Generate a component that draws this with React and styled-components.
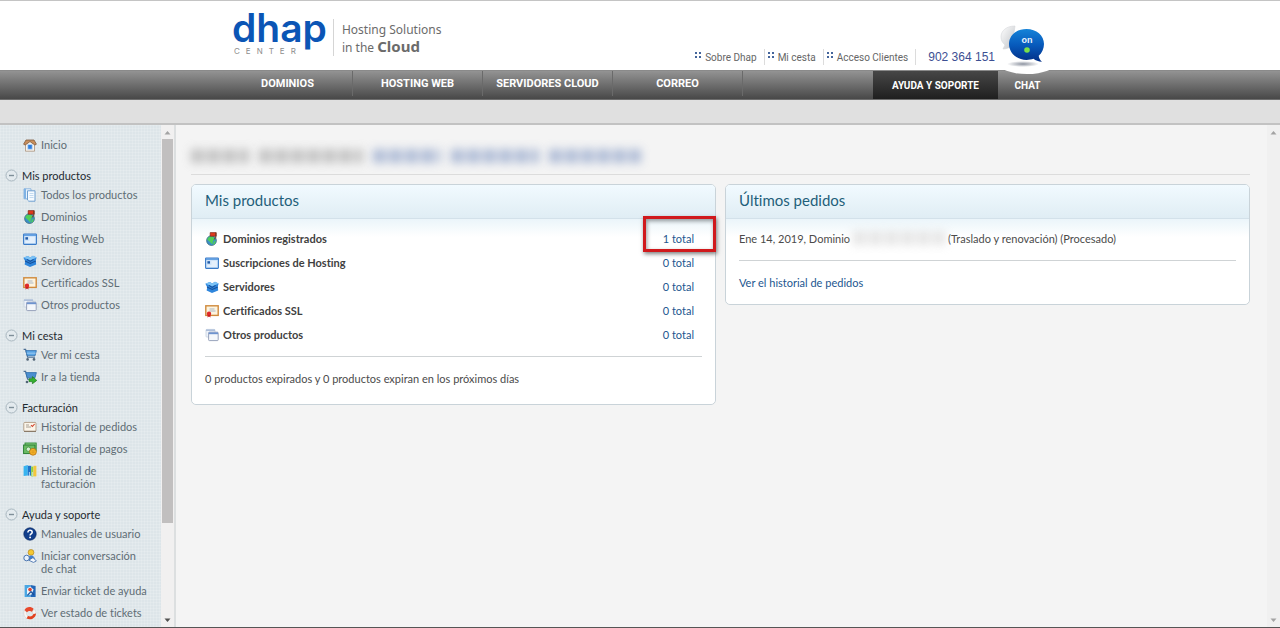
import React, { useState } from 'react';
import styled, { createGlobalStyle, css } from 'styled-components';

const sections = [
  {
    title: 'Mis productos',
    items: [
      { label: 'Todos los productos', icon: 'pages' },
      { label: 'Dominios', icon: 'domain' },
      { label: 'Hosting Web', icon: 'hosting' },
      { label: 'Servidores', icon: 'server' },
      { label: 'Certificados SSL', icon: 'ssl' },
      { label: 'Otros productos', icon: 'other' },
    ],
  },
  {
    title: 'Mi cesta',
    items: [
      { label: 'Ver mi cesta', icon: 'cart' },
      { label: 'Ir a la tienda', icon: 'store' },
    ],
  },
  {
    title: 'Facturación',
    items: [
      { label: 'Historial de pedidos', icon: 'orders' },
      { label: 'Historial de pagos', icon: 'payments' },
      { label: 'Historial de facturación', icon: 'billing' },
    ],
  },
  {
    title: 'Ayuda y soporte',
    items: [
      { label: 'Manuales de usuario', icon: 'help' },
      { label: 'Iniciar conversación de chat', icon: 'agent' },
      { label: 'Enviar ticket de ayuda', icon: 'ticket' },
      { label: 'Ver estado de tickets', icon: 'lifebuoy' },
    ],
  },
];

const products = [
  { label: 'Dominios registrados', icon: 'domain', total: 1 },
  { label: 'Suscripciones de Hosting', icon: 'hosting', total: 0 },
  { label: 'Servidores', icon: 'server', total: 0 },
  { label: 'Certificados SSL', icon: 'ssl', total: 0 },
  { label: 'Otros productos', icon: 'other', total: 0 },
];

const drawings = {
  home: (
    <>
      <path d="M2.5 6v7.2h9V6L7 2.5z" fill="#f7f3ee" stroke="#a9927c" strokeWidth=".8" />
      <path d="M.6 6.2L3 2h8l2.4 4.2-1.6.8L7 3.6 2.2 7z" fill="#c98f5c" stroke="#7d583c" strokeWidth=".8" />
      <rect x="4.8" y="6.6" width="4.4" height="4.6" fill="#2b7ee0" stroke="#bcd6f4" strokeWidth=".8" />
    </>
  ),
  pages: (
    <>
      <path d="M1 .8h7v10H1z" fill="#e8f3fd" stroke="#8fb7de" />
      <path d="M1 .8h2v10H1z" fill="#7fb2e4" />
      <path d="M4.5 2.8h7.5v10.4H5.8L4.5 12z" fill="#f6fbff" stroke="#6f9fcf" />
      <path d="M6.5 5.5h4M6.5 7.5h4M6.5 9.5h4" stroke="#b7d3ec" strokeWidth=".8" />
    </>
  ),
  domain: (
    <>
      <circle cx="6.5" cy="8.6" r="4.9" fill="#3c8fc7" stroke="#2c5f6f" strokeWidth=".7" />
      <path d="M2.2 7.4c1.6-3 3.6-3.4 5.4-2.9l2.4 2.2-2 2.4-.6 3.4-2.4-2.6z" fill="#4fd05a" />
      <path d="M9 9.4l1.8-1-.8 3.4-2 1z" fill="#4fd05a" />
      <path d="M5.2.6h6v3.6h-6z" fill="#e03a1e" stroke="#7d2415" strokeWidth=".7" />
      <path d="M10.8.8v5l-2 1.6" fill="none" stroke="#6a3b24" />
    </>
  ),
  hosting: (
    <>
      <rect x=".6" y="2" width="12.8" height="10.4" rx=".6" fill="#cfe4fa" stroke="#3a7bc8" strokeWidth="1.1" />
      <path d="M1 2.4h12v1.4H1z" fill="#4b91de" />
      <rect x="2.4" y="5.2" width="2.6" height="2.4" fill="#245da8" />
      <path d="M6.4 6h5.4M6.4 8h5.4M2.4 10h9.4" stroke="#fff" strokeWidth=".9" />
    </>
  ),
  server: (
    <>
      <path d="M.4 3.8L4.8 2l2.4 1.6L10 1.8l3.6 1.6-.8 3.2.4 3.8L7 13 1.6 10.6l.6-3.4z" fill="#2f86dc" />
      <path d="M.4 3.8L4.8 2l2.4 1.6L10 1.8l3.6 1.6L7.4 6.2z" fill="#7cc2f5" />
      <path d="M2 7l5.2 2.4L12.8 7M4 5.4l3.2 2 3.4-2" fill="none" stroke="#174f99" strokeWidth="1.1" />
    </>
  ),
  ssl: (
    <>
      <rect x=".8" y="1.8" width="12.4" height="9.6" fill="#fdf4df" stroke="#d08a3c" strokeWidth="1.4" />
      <path d="M4.5 5h5M4.5 7h6" stroke="#a9b7c6" />
      <circle cx="4" cy="9.8" r="2.2" fill="#e02a2a" />
      <path d="M2.8 11l-.4 2.6 1.6-1 1.6 1-.4-2.6z" fill="#c81f1f" />
    </>
  ),
  other: (
    <>
      <rect x="1" y="1.4" width="9" height="7.6" rx=".8" fill="#eef3fa" stroke="#c5d0e0" strokeWidth=".8" />
      <path d="M1 1.4h9v1.6H1z" fill="#aebfda" />
      <rect x="3.6" y="4.2" width="9.6" height="8.4" rx=".8" fill="#f4f7fb" stroke="#8d99b4" strokeWidth=".9" />
      <path d="M3.8 4.4h9.2v1.8H3.8z" fill="#6d93cf" />
    </>
  ),
  cart: (
    <>
      <path d="M.6 1.4h2l2 7.8h7.4" fill="none" stroke="#4d6f94" strokeWidth="1.1" />
      <path d="M2.8 2.6h10.6l-1.4 5.2H4.2z" fill="#5aa6e6" stroke="#2d6cab" strokeWidth=".8" />
      <path d="M3.6 5.2h9.2" stroke="#c5e1f8" strokeWidth=".6" />
      <circle cx="4.6" cy="11.4" r="1.3" fill="#526577" />
      <circle cx="11" cy="11.4" r="1.3" fill="#526577" />
    </>
  ),
  store: (
    <>
      <path d="M.6 1.4h2l2 7.8h7.4" fill="none" stroke="#4d6f94" strokeWidth="1.1" />
      <path d="M2.8 2.6h10.6l-1.4 5.2H4.2z" fill="#4a8fd0" stroke="#2d6cab" strokeWidth=".8" />
      <circle cx="4" cy="12" r="1.3" fill="#526577" />
      <path d="M6 8.8h3.4V6.6l4.4 3.8-4.4 3.4v-2.2H6z" fill="#35b22f" stroke="#1c7a1c" strokeWidth=".7" />
    </>
  ),
  orders: (
    <>
      <rect x=".8" y="2.4" width="12.2" height="9" rx="1" fill="#fbf5ea" stroke="#b3a08a" />
      <path d="M1 11.4h12" stroke="#8a7a68" strokeWidth="1.2" />
      <path d="M3 5h3M3 7h5" stroke="#a79e92" />
      <path d="M8 5.2l1.4 1.2 2.2-2.4" fill="none" stroke="#d2452e" strokeWidth="1.1" />
    </>
  ),
  payments: (
    <>
      <rect x="2" y="1" width="11.2" height="8" fill="#8fce84" stroke="#2c8a34" strokeWidth=".9" />
      <rect x=".6" y="3" width="11.4" height="8.6" fill="#6cbb63" stroke="#237a2c" strokeWidth=".9" />
      <circle cx="5.4" cy="7.2" r="2.2" fill="#d5efcf" stroke="#2c8a34" strokeWidth=".7" />
      <circle cx="10" cy="9.8" r="3.4" fill="#f6b62b" stroke="#b9700f" strokeWidth=".8" />
      <path d="M8.4 9h3.2M8.4 10.8h3.2" stroke="#d48c16" strokeWidth=".8" />
    </>
  ),
  billing: (
    <>
      <path d="M.6 2.2L4.8 1v10.4L.6 12z" fill="#38b4f0" />
      <path d="M4.8 1.8h3.4v9.8H4.8z" fill="#1f72c9" />
      <path d="M8.2 2.6h2.2v9.8H8.2z" fill="#8ed13c" />
      <path d="M10.4 1.8h3v10.6h-3z" fill="#f4c63d" />
      <path d="M6.4 8v4M9.3 8v4" stroke="#d7effc" strokeWidth=".8" />
    </>
  ),
  help: (
    <>
      <circle cx="7" cy="7" r="6.2" fill="#123f8c" stroke="#0b2a63" strokeWidth=".7" />
      <path d="M4.9 5.4c0-2.8 4.3-2.6 4.3-.2 0 1.6-2.1 1.6-2.1 3.2" fill="none" stroke="#fff" strokeWidth="1.5" />
      <circle cx="7.1" cy="10.4" r=".95" fill="#fff" />
    </>
  ),
  agent: (
    <>
      <circle cx="8" cy="3.4" r="2.9" fill="#f5c832" stroke="#a97a14" strokeWidth=".6" />
      <path d="M4.6 11c0-6 7.4-6 7.4 0z" fill="#3f7fd0" />
      <circle cx="3.6" cy="9" r="2.8" fill="#e8f1fb" stroke="#3a68a8" strokeWidth=".9" />
      <path d="M5.8 11.2l4.2-2.6 3.4 3.4-3 1.4z" fill="#f4f7fc" stroke="#3a68a8" strokeWidth=".8" />
    </>
  ),
  ticket: (
    <>
      <path d="M1.6 1h6v12h-6z" fill="#4aa6e2" />
      <path d="M7.6 1l5 1v11h-5z" fill="#2366b8" />
      <path d="M4 4.4l3.2-2 3.4 3.2-2.2 5.2H4z" fill="#e9f4fc" />
      <circle cx="7" cy="5.6" r="1.8" fill="#de4330" />
      <path d="M4.4 11.4L8 7.6l3 3.4" fill="none" stroke="#1d4f96" strokeWidth="1.2" />
    </>
  ),
  lifebuoy: (
    <>
      <path d="M1.4 4.2C3.4.6 7.6 0 10.8 3L9.2 6C7.2 4.4 5.4 4.6 3.8 6.4z" fill="#e8492c" />
      <path d="M9.2 6l1.6-3c1.6 1.2 2.2 2.6 2.2 4.4l-2.8.8zM1.4 4.2l2.4 2.2c-.6 1.6 0 2.8 1.2 3.6l-1.4 2.6C.8 10.4.2 7.2 1.4 4.2z" fill="#f8f5f3" stroke="#cfc8c4" strokeWidth=".5" />
      <path d="M13 7.4c-.2 4-4.4 7.4-9.4 5.2L5 10c2.4 1 4.4.2 5.2-1.8z" fill="#e2411f" />
    </>
  ),
};

const Icon = ({ name }) => (
  <IconSvg viewBox="0 0 14 14" aria-hidden="true">
    {drawings[name]}
  </IconSvg>
);

const Dots = () => (
  <DotsSvg viewBox="0 0 7 7" aria-hidden="true">
    <path d="M0 0h2v2H0zM4 0h2v2H4zM0 4h2v2H0zM4 4h2v2H4z" fill="#44659b" />
  </DotsSvg>
);

const ChatBubble = () => (
  <BubbleSvg viewBox="0 0 60 52" aria-hidden="true">
    <defs>
      <linearGradient id="bubbleBlue" x1="0" y1="0" x2="0" y2="1">
        <stop offset="0" stopColor="#1583d8" />
        <stop offset=".5" stopColor="#0759bb" />
        <stop offset="1" stopColor="#032f86" />
      </linearGradient>
      <radialGradient id="bubbleShade">
        <stop offset="0" stopColor="#8d93a0" />
        <stop offset="1" stopColor="#fff" />
      </radialGradient>
      <linearGradient id="bubbleGrey" x1="0" y1="0" x2="1" y2="1">
        <stop offset="0" stopColor="#fff" />
        <stop offset="1" stopColor="#bfc2c6" />
      </linearGradient>
    </defs>
    <ellipse cx="29" cy="40" rx="29" ry="11" fill="#fff" />
    <ellipse cx="25" cy="41" rx="16" ry="3" fill="url(#bubbleShade)" />
    <path d="M17 3C8 3 3 8 3 14c0 4 2 6 4 8l-2 4c4 0 7-2 9-3z" fill="url(#bubbleGrey)" stroke="#d5d7da" strokeWidth=".6" />
    <path d="M28.500 6C18 6 11 12.500 11 21s7.500 16 17.500 16c2.500 0 5-.5 7-1.200 2 1.600 5 3 8.500 3-2-1.500-3-3.800-3.300-6C44 30 46 25.500 46 21c0-8.500-7.500-15-17.500-15z" fill="url(#bubbleBlue)" />
    <circle cx="29" cy="27" r="2.800" fill="#7be04a" />
    <text x="29" y="20" textAnchor="middle" fontFamily="Liberation Sans, sans-serif" fontWeight="700" fontSize="9" fill="#e8f3ff">on</text>
  </BubbleSvg>
);

const ScrollBar = ({ thumb, faint }) => (
  <Track $faint={faint} aria-hidden="true">
    <ArrowSvg viewBox="0 0 13 14">
      <path d="M3.500 9.500L6.500 6l3 3.500z" fill="#a3a3a3" />
    </ArrowSvg>
    <Rail>{thumb && <Thumb />}</Rail>
    <ArrowSvg viewBox="0 0 13 14">
      <path d="M3.500 5.500h6L6.500 9z" fill={faint ? '#a3a3a3' : '#505050'} />
    </ArrowSvg>
  </Track>
);

const MenuSection = ({ title, items }) => {
  const [open, setOpen] = useState(true);

  return (
    <section>
      <SectionToggle type="button" aria-expanded={open} onClick={() => setOpen(!open)}>
        <ToggleSvg viewBox="0 0 13 13" aria-hidden="true">
          <circle cx="6.500" cy="6.500" r="5.500" fill="#e3eaee" stroke="#a9b7bf" />
          <path d={open ? 'M4 6.500h5' : 'M4 6.500h5M6.500 4v5'} stroke="#7f8f99" strokeWidth="1.400" />
        </ToggleSvg>
        {title}
      </SectionToggle>
      {open && (
        <MenuList>
          {items.map((item) => (
            <li key={item.label}>
              <MenuLink href="#">
                <Icon name={item.icon} />
                <span>{item.label}</span>
              </MenuLink>
            </li>
          ))}
        </MenuList>
      )}
    </section>
  );
};

const App = () => (
  <Page>
    <GlobalStyle />
    <Header>
      <Container>
        <Brand href="#">
          <BrandMark>
            <BrandName>dhap</BrandName>
            <BrandSub>CENTER</BrandSub>
          </BrandMark>
          <Slogan>
            Hosting Solutions
            <br />
            in the <strong>Cloud</strong>
          </Slogan>
        </Brand>
        <TopLinks>
          <TopLink href="#"><Dots />Sobre Dhap</TopLink>
          <TopLink href="#"><Dots />Mi cesta</TopLink>
          <TopLink href="#"><Dots />Acceso Clientes</TopLink>
          <Phone>902 364 151</Phone>
        </TopLinks>
      </Container>
    </Header>

    <NavBar>
      <Container>
        <NavLink href="#">DOMINIOS</NavLink>
        <NavLink href="#">HOSTING WEB</NavLink>
        <NavLink href="#">SERVIDORES CLOUD</NavLink>
        <NavLink href="#">CORREO</NavLink>
        <SupportLink href="#">AYUDA Y SOPORTE</SupportLink>
        <ChatLink href="#">
          <ChatBubble />
          CHAT
        </ChatLink>
      </Container>
    </NavBar>
    <SubBar />

    <Body>
      <Sidebar>
        <MenuLink href="#">
          <Icon name="home" />
          <span>Inicio</span>
        </MenuLink>
        {sections.map((section) => (
          <MenuSection key={section.title} {...section} />
        ))}
      </Sidebar>
      <ScrollBar thumb />

      <Main>
        <Customer>
          <Redacted $width={58} $color="#a0a0a0" />
          <Redacted $width={104} $color="#a0a0a0" />
          <Redacted $width={68} $color="#7f95c2" />
          <Redacted $width={88} $color="#7f95c2" />
          <Redacted $width={92} $color="#7f95c2" />
        </Customer>
        <Panels>
          <Panel>
            <PanelTitle>Mis productos</PanelTitle>
            <PanelBody>
              <ProductTable>
                <tbody>
                  {products.map((product) => (
                    <tr key={product.label}>
                      <ProductName scope="row">
                        <NameLine>
                          <Icon name={product.icon} />
                          {product.label}
                        </NameLine>
                      </ProductName>
                      <ProductTotal>
                        <TextLink href="#">{product.total} total</TextLink>
                        {product.total > 0 && <Highlight />}
                      </ProductTotal>
                    </tr>
                  ))}
                </tbody>
              </ProductTable>
              <Divider />
              <Text>0 productos expirados y 0 productos expiran en los próximos días</Text>
            </PanelBody>
          </Panel>

          <Panel>
            <PanelTitle>Últimos pedidos</PanelTitle>
            <PanelBody $compact>
              <OrderLine>
                Ene 14, 2019, Dominio
                <Redacted $width={92} $color="#d2d2d2" />
                (Traslado y renovación) (Procesado)
              </OrderLine>
              <Divider />
              <Text>
                <TextLink href="#">Ver el historial de pedidos</TextLink>
              </Text>
            </PanelBody>
          </Panel>
        </Panels>
      </Main>
      <ScrollBar faint />
    </Body>
  </Page>
);

export default App;

// Styled Components

const GlobalStyle = createGlobalStyle`
  * {
    box-sizing: border-box;
  }

  body {
    margin: 0;
    background: #f4f4f4;
    color: #4b4b4b;
    font-family: Lato, 'Open Sans', sans-serif;
    font-size: 11px;
    font-variant-ligatures: none;
    line-height: 13px;
  }

  a {
    text-decoration: none;
  }
`;

const Page = styled.div`
  display: flex;
  flex-direction: column;
  height: 100vh;
  border-bottom: 1px solid #555;
`;

const Container = styled.div`
  display: flex;
  width: 100%;
  max-width: 834px;
  height: 100%;
  margin: 0 auto;
`;

const Header = styled.header`
  height: 70px;
  background: #fff;
  border-top: 1px solid #c4c4c4;
`;

const Brand = styled.a`
  display: flex;
  align-items: flex-start;
  padding: 9px 0 0 9px;
`;

const BrandMark = styled.span`
  display: flex;
  flex-direction: column;
`;

const BrandName = styled.span`
  color: #0b55b5;
  font-family: Inter, sans-serif;
  font-size: 39px;
  font-weight: 600;
  line-height: 36px;
`;

const BrandSub = styled.span`
  padding-left: 2px;
  color: #8d8d8d;
  font-family: Inter, sans-serif;
  font-size: 8px;
  line-height: 10px;
  letter-spacing: 6px;
`;

const Slogan = styled.span`
  margin: 9px 0 0 6px;
  padding: 3px 0 0 8px;
  border-left: 1px solid #d5d5d5;
  color: #6b6b6b;
  font-family: 'Noto Sans', sans-serif;
  font-size: 12px;
  line-height: 16px;

  strong {
    font-size: 15px;
  }
`;

const TopLinks = styled.div`
  display: flex;
  align-items: center;
  height: 20px;
  margin: 46px 62px 0 auto;
`;

const TopLink = styled.a`
  display: flex;
  align-items: center;
  gap: 3px;
  height: 16px;
  margin-right: 3px;
  padding-right: 7px;
  border-right: 1px solid #dcdcdc;
  color: #666;
  font-family: Roboto, sans-serif;
  font-size: 10px;
`;

const DotsSvg = styled.svg`
  width: 7px;
  height: 7px;
  margin-bottom: 3px;
`;

const Phone = styled.span`
  margin-left: 9px;
  color: #3d4f93;
  font-family: 'Liberation Sans', sans-serif;
  font-size: 12px;
`;

const NavBar = styled.nav`
  height: 30px;
  border-top: 1px solid #8a8a8a;
  border-bottom: 1px solid #6d6d6d;
  background: linear-gradient(#939393, #484848);
`;

const navText = css`
  display: flex;
  align-items: center;
  justify-content: center;
  color: #fff;
  font-family: Roboto, sans-serif;
  font-size: 11px;
  font-weight: 700;
`;

const NavLink = styled.a`
  ${navText}
  width: 130px;
  height: 25px;
  border-right: 1px solid #6a6a6a;
`;

const SupportLink = styled.a`
  ${navText}
  width: 125px;
  margin-left: auto;
  background: linear-gradient(#474747, #1f1f1f);
  font-size: 10px;
`;

const ChatLink = styled.a`
  ${navText}
  position: relative;
  width: 59px;
  font-size: 10px;
`;

const BubbleSvg = styled.svg`
  position: absolute;
  left: 0;
  bottom: 24px;
  width: 60px;
  height: 52px;
`;

const SubBar = styled.div`
  height: 25px;
  border-bottom: 2px solid #c2c2c2;
  background: #e0e0e0;
`;

const Body = styled.div`
  display: flex;
  flex: 1;
  min-height: 0;
`;

const Sidebar = styled.aside`
  width: 161px;
  padding-top: 10px;
  overflow: hidden;
  background-color: #dde5e9;
  background-image:
    repeating-linear-gradient(90deg, rgba(255, 255, 255, 0.15) 0 1px, transparent 1px 3px),
    repeating-linear-gradient(rgba(255, 255, 255, 0.15) 0 1px, transparent 1px 3px);
`;

const SectionToggle = styled.button`
  display: flex;
  align-items: center;
  gap: 4px;
  width: 100%;
  height: 20px;
  margin-top: 8px;
  padding: 0 0 0 5px;
  border: 0;
  background: none;
  color: #1f2a30;
  font: inherit;
  text-align: left;
  cursor: pointer;
`;

const ToggleSvg = styled.svg`
  width: 13px;
  height: 13px;
`;

const MenuList = styled.ul`
  margin: 0;
  padding: 0;
  list-style: none;
`;

const MenuLink = styled.a`
  display: flex;
  gap: 4px;
  padding: 3px 12px 6px 23px;
  color: #5f6d75;

  &:hover {
    text-decoration: underline;
  }
`;

const IconSvg = styled.svg`
  flex: none;
  width: 14px;
  height: 14px;
  margin-bottom: -1px;
`;

const Track = styled.div`
  display: flex;
  flex: none;
  flex-direction: column;
  width: ${({ $faint }) => ($faint ? '13px' : '15px')};
  border-right: ${({ $faint }) => ($faint ? '0' : '2px solid #dcdfe0')};
  background: ${({ $faint }) => ($faint ? '#f0f0f0' : '#f1f0f0')};
`;

const ArrowSvg = styled.svg`
  flex: none;
  width: 13px;
  height: 14px;
`;

const Rail = styled.div`
  flex: 1;
  padding: 0 1px;
`;

const Thumb = styled.div`
  height: 81%;
  background: #c1bfbf;
`;

const Main = styled.main`
  flex: 1;
  min-width: 0;
  padding: 15px 17px 0 15px;
`;

const Customer = styled.div`
  display: flex;
  align-items: center;
  gap: 10px;
  height: 35px;
  padding-bottom: 2px;
  border-bottom: 1px solid #dcdcdc;
`;

const Redacted = styled.span`
  width: ${({ $width }) => $width}px;
  height: 14px;
  background: repeating-linear-gradient(90deg, ${({ $color }) => $color} 0 13px, transparent 13px 16px);
  opacity: 0.6;
  filter: blur(5px);
`;

const Panels = styled.div`
  display: grid;
  grid-template-columns: 1fr 1fr;
  align-items: start;
  gap: 9px;
  margin-top: 9px;
`;

const Panel = styled.section`
  border: 1px solid #c9d3d9;
  border-radius: 5px;
  background: #fff;
`;

const PanelTitle = styled.h2`
  margin: 0;
  padding: 0 13px 2px;
  border-bottom: 1px solid #d3e1ea;
  border-radius: 4px 4px 0 0;
  background: linear-gradient(#f1faff, #e0edf4);
  color: #1f5f7a;
  font-size: 15px;
  font-weight: 400;
  line-height: 31px;
`;

const PanelBody = styled.div`
  padding: 7px 13px ${({ $compact }) => ($compact ? '15px' : '19px')};
  background: linear-gradient(#ebf5fa, #fff 18px);
  border-radius: 0 0 5px 5px;
`;

const ProductTable = styled.table`
  width: 100%;
  border-collapse: collapse;
`;

const ProductName = styled.th`
  height: 24px;
  padding: 0;
  color: #3f3f3f;
  font-weight: 700;
  text-align: left;
`;

const NameLine = styled.span`
  display: flex;
  align-items: center;
  gap: 4px;
`;

const ProductTotal = styled.td`
  position: relative;
  padding: 0 8px 0 0;
  text-align: right;
`;

const Highlight = styled.span`
  position: absolute;
  top: -10px;
  right: -14px;
  width: 73px;
  height: 36px;
  border: 3px solid #d0191c;
  box-shadow: 1px 2px 4px rgba(0, 0, 0, 0.5), inset 1px 2px 4px rgba(0, 0, 0, 0.4);
  pointer-events: none;
`;

const TextLink = styled.a`
  color: #23568f;

  &:hover {
    text-decoration: underline;
  }
`;

const OrderLine = styled.p`
  display: flex;
  align-items: center;
  gap: 3px;
  height: 24px;
  margin: 0;
`;

const Divider = styled.hr`
  margin: 10px 0 15px;
  border: 0;
  border-top: 1px solid #cfd3d5;
`;

const Text = styled.p`
  margin: 0;
`;
